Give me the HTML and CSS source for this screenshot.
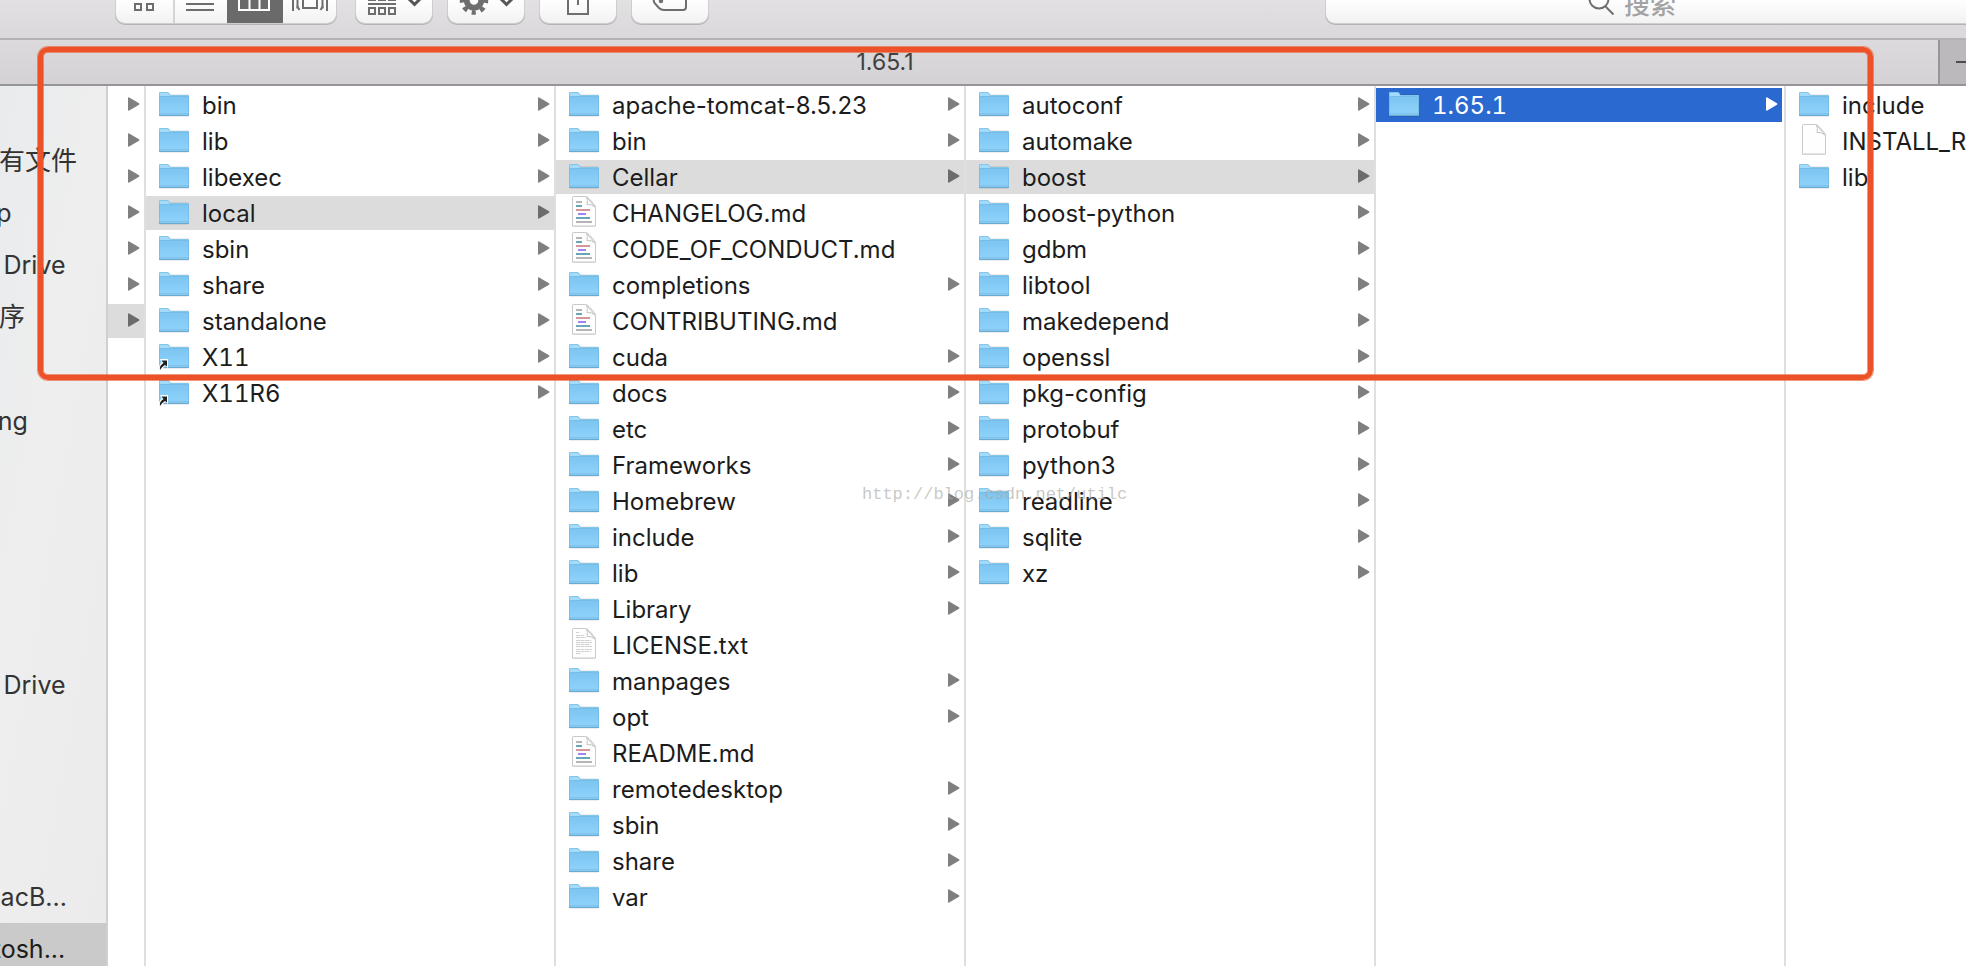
FILE: index.html
```html
<!DOCTYPE html>
<html lang="zh-CN">
<head>
<meta charset="utf-8">
<title>1.65.1</title>
<link rel="stylesheet" href="styles.css">
</head>
<body>
<svg class="defs" aria-hidden="true">
  <defs>
    <linearGradient id="fg" x1="0" y1="0" x2="0" y2="1"><stop offset="0" stop-color="#7cc6f2"/><stop offset="1" stop-color="#90d3fb"/></linearGradient>
    <symbol id="arrow" viewBox="0 0 12 14"><path d="M0 1.2Q0 0 1.2.5L11 6.2Q12 7 11 7.8L1.2 13.5Q0 14 0 12.8Z" fill="currentColor"/></symbol>
    <symbol id="folder" viewBox="0 0 30 32">
      <path d="M.5 6.5h29V28.500h-29z" fill="#000" opacity=".14"/>
      <path d="M0 5Q0 4 1 4H8.500Q9.500 4 10.200 5L11.500 7H29Q30 7 30 8V27Q30 28 29 28H1Q0 28 0 27Z" fill="#a3dbfb"/>
      <path d="M0 9H30V27Q30 28 29 28H1Q0 28 0 27Z" fill="url(#fg)"/>
      <path d="M.5 5Q.5 4.500 1 4.500H8.500Q9.300 4.500 9.800 5.300L11.200 7.500H29Q29.500 7.500 29.500 8V27H.5Z" fill="none" stroke="#6fb6df" stroke-opacity=".6"/>
      <path d="M0 8.500H30" stroke="#79bde6"/>
      <path d="M1 25.500H29" stroke="#7fc4ee"/>
      <path d="M0 27.500H30" stroke="#6ba9cd"/>
    </symbol>
    <symbol id="alias" viewBox="0 0 30 32">
      <use href="#folder" width="30" height="32"/>
      <path d="M0 31Q-1 25 3 22.500L1 19H9V28L6.500 26Q3 28 1.500 31Z" fill="#fff"/>
      <path d="M1 30Q0 25.500 4.500 23L2.500 20.500H8V26.500L6 25Q2.500 27 1 30Z" fill="#222"/>
    </symbol>
    <symbol id="page" viewBox="0 0 30 32">
      <path d="M4.500.8H17L26.300 10.500V30.500H3.500V1.800Q3.500.8 4.500.8Z" fill="#000" opacity=".12" stroke="#000" stroke-width="1"/>
      <path d="M4.500.5H16.500Q18.500.8 20 2.500L24.500 7.500Q26.500 9.500 26.500 12V29Q26.500 30 25.500 30H4.500Q3.500 30 3.500 29V1.500Q3.500.5 4.500.5Z" fill="#fefefe" stroke="#c9c9c9"/>
      <path d="M17.500 1Q19 4 18 8.500Q22.500 7.800 26 11Z" fill="#fff" stroke="#c4c4c4"/>
    </symbol>
    <symbol id="md" viewBox="0 0 30 32">
      <use href="#page" width="30" height="32"/>
      <g stroke-width="2"><path d="M7 6H13M7 26H23" stroke="#b5b5b5"/><path d="M7 10H13M7 22H21" stroke="#67a6b8"/><path d="M7 14H21" stroke="#d2969c"/><path d="M9 18H17" stroke="#a283f2"/></g>
    </symbol>
    <symbol id="txt" viewBox="0 0 30 32">
      <use href="#page" width="30" height="32"/>
      <path d="M7 4.500H10M7 7.500H15M7 9.500H17M7 12.500H22M7 14.500H23M7 16.500H21M7 18.500H23M7 21.500H23M7 23.500H22M7 25.500H12" stroke="#cfcfcf" stroke-dasharray="4 .6"/>
    </symbol>
  </defs>
</svg>

<div class="window">
  <header class="toolbar">
    <div class="segmented">
      <button class="seg grid" aria-label="图标"><svg viewBox="116 -22 57 46"><path d="M135 5h6v6h-6zM147 5h6v6h-6zM135-7h6v6h-6zM147-7h6v6h-6z"/></svg></button>
      <button class="seg list" aria-label="列表"><svg viewBox="175 -22 52 46"><path d="M186 11H214M186 5H214M186-1H214"/></svg></button>
      <button class="seg cols" aria-label="分栏" aria-pressed="true"><svg viewBox="227 -22 56 46"><path d="M239-10h30V11h-30zM249.500-10V11M259.500-10V11"/></svg></button>
      <button class="seg flow" aria-label="封面流"><svg viewBox="283 -22 53 46"><path d="M303-10h14V9h-14zM293-9V12M327-9V12M297.500-9V9.500M322.500-9V9.500"/><path d="M297 7l2.500 4M323 7l-2.500 4"/></svg></button>
    </div>
    <button class="tool" aria-label="排列"><svg viewBox="356 -22 76 46"><path d="M368 5H396M369 9h6v6h-6zM379 9h6v6h-6zM389 9h6v6h-6zM369-5h6v6h-6zM379-5h6v6h-6zM389-5h6v6h-6z"/><path class="chev" d="M408-1l6.500 6.500L421-1"/></svg></button>
    <button class="tool" aria-label="操作"><svg viewBox="448 -22 76 46"><circle cx="474" cy="1.500" r="7.300" stroke-width="6"/><circle cx="474" cy="1.500" r="12" stroke-width="4.500" stroke-dasharray="4.600 4.825" stroke-dashoffset="2.300" transform="rotate(90 474 1.500)"/><path class="chev" d="M500-1l6.500 6.500L513-1"/></svg></button>
    <button class="tool" aria-label="共享"><svg viewBox="540 -22 76 46"><path d="M574-6h-6V15h20V-6h-6M578-16V6"/></svg></button>
    <button class="tool" aria-label="标签"><svg viewBox="632 -22 76 46"><path d="M663-8H683Q686-8 686-5V8Q686 11 683 11H664Q661 11 659 9L654.500 4Q653 1.500 654.500-1L659-6Q661-8 663-8Z"/><circle cx="661" cy="2" r="1.200"/></svg></button>
    <label class="search">
      <svg viewBox="0 0 30 46"><circle cx="13" cy="22" r="9.500"/><path d="M19.500 29.500L27.500 37.500"/></svg>
      <input type="search" placeholder="搜索" aria-label="搜索">
    </label>
  </header>

  <div class="tabbar">
    <h1 class="tab">1.65.1</h1>
    <button class="newtab" aria-label="新标签页"><svg viewBox="0 0 30 44"><path d="M16 22H38M27 11V33"/></svg></button>
  </div>

  <main class="content">
    <nav class="sidebar">
      <ul>
        <li class="han">我的所有文件</li>
        <li>AirDrop</li>
        <li>iCloud Drive</li>
        <li class="han">应用程序</li>
        <li></li>
        <li>xiaoming</li>
      </ul>
      <ul>
        <li>iCloud Drive</li>
      </ul>
      <ul>
        <li>我的 MacB...</li>
        <li class="current">Macintosh...</li>
      </ul>
    </nav>
    <ul class="col narrow">
      <li><svg class="arrow"><use href="#arrow"/></svg></li>
      <li><svg class="arrow"><use href="#arrow"/></svg></li>
      <li><svg class="arrow"><use href="#arrow"/></svg></li>
      <li><svg class="arrow"><use href="#arrow"/></svg></li>
      <li><svg class="arrow"><use href="#arrow"/></svg></li>
      <li><svg class="arrow"><use href="#arrow"/></svg></li>
      <li class="open"><svg class="arrow"><use href="#arrow"/></svg></li>
    </ul>
    <ul class="col">
      <li><svg class="icon"><use href="#folder"/></svg><span>bin</span><svg class="arrow"><use href="#arrow"/></svg></li>
      <li><svg class="icon"><use href="#folder"/></svg><span>lib</span><svg class="arrow"><use href="#arrow"/></svg></li>
      <li><svg class="icon"><use href="#folder"/></svg><span>libexec</span><svg class="arrow"><use href="#arrow"/></svg></li>
      <li class="open"><svg class="icon"><use href="#folder"/></svg><span>local</span><svg class="arrow"><use href="#arrow"/></svg></li>
      <li><svg class="icon"><use href="#folder"/></svg><span>sbin</span><svg class="arrow"><use href="#arrow"/></svg></li>
      <li><svg class="icon"><use href="#folder"/></svg><span>share</span><svg class="arrow"><use href="#arrow"/></svg></li>
      <li><svg class="icon"><use href="#folder"/></svg><span>standalone</span><svg class="arrow"><use href="#arrow"/></svg></li>
      <li><svg class="icon"><use href="#alias"/></svg><span class="num">X11</span><svg class="arrow"><use href="#arrow"/></svg></li>
      <li><svg class="icon"><use href="#alias"/></svg><span class="num">X11R6</span><svg class="arrow"><use href="#arrow"/></svg></li>
    </ul>
    <ul class="col">
      <li><svg class="icon"><use href="#folder"/></svg><span>apache-tomcat-8.5.23</span><svg class="arrow"><use href="#arrow"/></svg></li>
      <li><svg class="icon"><use href="#folder"/></svg><span>bin</span><svg class="arrow"><use href="#arrow"/></svg></li>
      <li class="open"><svg class="icon"><use href="#folder"/></svg><span>Cellar</span><svg class="arrow"><use href="#arrow"/></svg></li>
      <li><svg class="icon"><use href="#md"/></svg><span>CHANGELOG.md</span></li>
      <li><svg class="icon"><use href="#md"/></svg><span>CODE_OF_CONDUCT.md</span></li>
      <li><svg class="icon"><use href="#folder"/></svg><span>completions</span><svg class="arrow"><use href="#arrow"/></svg></li>
      <li><svg class="icon"><use href="#md"/></svg><span>CONTRIBUTING.md</span></li>
      <li><svg class="icon"><use href="#folder"/></svg><span>cuda</span><svg class="arrow"><use href="#arrow"/></svg></li>
      <li><svg class="icon"><use href="#folder"/></svg><span>docs</span><svg class="arrow"><use href="#arrow"/></svg></li>
      <li><svg class="icon"><use href="#folder"/></svg><span>etc</span><svg class="arrow"><use href="#arrow"/></svg></li>
      <li><svg class="icon"><use href="#folder"/></svg><span>Frameworks</span><svg class="arrow"><use href="#arrow"/></svg></li>
      <li><svg class="icon"><use href="#folder"/></svg><span>Homebrew</span><svg class="arrow"><use href="#arrow"/></svg></li>
      <li><svg class="icon"><use href="#folder"/></svg><span>include</span><svg class="arrow"><use href="#arrow"/></svg></li>
      <li><svg class="icon"><use href="#folder"/></svg><span>lib</span><svg class="arrow"><use href="#arrow"/></svg></li>
      <li><svg class="icon"><use href="#folder"/></svg><span>Library</span><svg class="arrow"><use href="#arrow"/></svg></li>
      <li><svg class="icon"><use href="#txt"/></svg><span>LICENSE.txt</span></li>
      <li><svg class="icon"><use href="#folder"/></svg><span>manpages</span><svg class="arrow"><use href="#arrow"/></svg></li>
      <li><svg class="icon"><use href="#folder"/></svg><span>opt</span><svg class="arrow"><use href="#arrow"/></svg></li>
      <li><svg class="icon"><use href="#md"/></svg><span>README.md</span></li>
      <li><svg class="icon"><use href="#folder"/></svg><span>remotedesktop</span><svg class="arrow"><use href="#arrow"/></svg></li>
      <li><svg class="icon"><use href="#folder"/></svg><span>sbin</span><svg class="arrow"><use href="#arrow"/></svg></li>
      <li><svg class="icon"><use href="#folder"/></svg><span>share</span><svg class="arrow"><use href="#arrow"/></svg></li>
      <li><svg class="icon"><use href="#folder"/></svg><span>var</span><svg class="arrow"><use href="#arrow"/></svg></li>
    </ul>
    <ul class="col">
      <li><svg class="icon"><use href="#folder"/></svg><span>autoconf</span><svg class="arrow"><use href="#arrow"/></svg></li>
      <li><svg class="icon"><use href="#folder"/></svg><span>automake</span><svg class="arrow"><use href="#arrow"/></svg></li>
      <li class="open"><svg class="icon"><use href="#folder"/></svg><span>boost</span><svg class="arrow"><use href="#arrow"/></svg></li>
      <li><svg class="icon"><use href="#folder"/></svg><span>boost-python</span><svg class="arrow"><use href="#arrow"/></svg></li>
      <li><svg class="icon"><use href="#folder"/></svg><span>gdbm</span><svg class="arrow"><use href="#arrow"/></svg></li>
      <li><svg class="icon"><use href="#folder"/></svg><span>libtool</span><svg class="arrow"><use href="#arrow"/></svg></li>
      <li><svg class="icon"><use href="#folder"/></svg><span>makedepend</span><svg class="arrow"><use href="#arrow"/></svg></li>
      <li><svg class="icon"><use href="#folder"/></svg><span>openssl</span><svg class="arrow"><use href="#arrow"/></svg></li>
      <li><svg class="icon"><use href="#folder"/></svg><span>pkg-config</span><svg class="arrow"><use href="#arrow"/></svg></li>
      <li><svg class="icon"><use href="#folder"/></svg><span>protobuf</span><svg class="arrow"><use href="#arrow"/></svg></li>
      <li><svg class="icon"><use href="#folder"/></svg><span>python3</span><svg class="arrow"><use href="#arrow"/></svg></li>
      <li><svg class="icon"><use href="#folder"/></svg><span>readline</span><svg class="arrow"><use href="#arrow"/></svg></li>
      <li><svg class="icon"><use href="#folder"/></svg><span>sqlite</span><svg class="arrow"><use href="#arrow"/></svg></li>
      <li><svg class="icon"><use href="#folder"/></svg><span>xz</span><svg class="arrow"><use href="#arrow"/></svg></li>
    </ul>
    <ul class="col">
      <li class="selected"><svg class="icon"><use href="#folder"/></svg><span class="num">1.65.1</span><svg class="arrow"><use href="#arrow"/></svg></li>
    </ul>
    <ul class="col">
      <li><svg class="icon"><use href="#folder"/></svg><span>include</span></li>
      <li><svg class="icon"><use href="#page"/></svg><span>INSTALL_RECEIPT.json</span></li>
      <li><svg class="icon"><use href="#folder"/></svg><span>lib</span></li>
    </ul>
  </main>

  <div class="marker"></div>
  <p class="watermark">http://blog.csdn.net/utilc</p>
</div>
</body>
</html>
```

FILE: styles.css
```css
* { box-sizing: border-box; }

body {
  margin: 0;
  background: #fff;
  color: #1c1c1c;
  font: 24px/34px Inter, "Noto Sans CJK SC", sans-serif;
}

ul, h1, p { margin: 0; padding: 0; list-style: none; }
button { padding: 0; border: 0; background: none; }
svg { display: block; flex: none; }
.defs { position: absolute; width: 0; height: 0; }
.num { font-variant-numeric: tabular-nums; }

.window {
  position: relative;
  display: flex;
  flex-direction: column;
  height: 100vh;
  overflow: hidden;
}

/* toolbar */
.toolbar {
  display: flex;
  flex: none;
  align-items: flex-end;
  gap: 16px;
  height: 40px;
  padding: 0 0 15px 116px;
  overflow: hidden;
  background: linear-gradient(#e3e0e3, #dad8da);
  border-bottom: 2px solid #b3b1b3;
}
.toolbar svg {
  height: 46px;
  fill: none;
  stroke: #6e6e6e;
  stroke-width: 2;
}
.segmented, .tool, .search {
  flex: none;
  height: 46px;
  border-radius: 9px;
  background: linear-gradient(#fefefe 50%, #f2f2f2);
  box-shadow: 0 0 0 1px #cfcdcf, 0 1px 0 1px #b5b3b5;
}
.segmented { display: flex; margin-right: 4px; overflow: hidden; }
.grid { width: 59px; border-right: 2px solid #d5d5d5; }
.list { width: 52px; }
.cols { width: 56px; background: #6a6a6a; }
.flow { width: 53px; }
.toolbar .cols svg { stroke: #fff; }
.tool { width: 76px; }
.toolbar .chev { stroke: #555; stroke-width: 3; }
.search {
  display: flex;
  flex: 1;
  margin-left: 602px;
  padding-left: 260px;
  border-radius: 9px 0 0 9px;
}
.search svg { width: 30px; }
.search input {
  flex: 1;
  min-width: 0;
  height: 50px;
  padding: 4px 8px 0;
  border: 0;
  background: none;
  outline: 0;
  font: 500 26px/46px Inter, "Noto Sans CJK SC", sans-serif;
}
.search input::placeholder { color: #a3a3a3; opacity: 1; }

/* tab bar */
.tabbar {
  display: flex;
  flex: none;
  height: 46px;
  background: linear-gradient(#dcdadc, #d4d2d4);
  border-bottom: 2px solid #979597;
}
.tab {
  flex: 1;
  padding-right: 168px;
  color: #404040;
  font-size: 23px;
  font-weight: 400;
  line-height: 44px;
  text-align: center;
}
.newtab {
  width: 28px;
  overflow: hidden;
  background: #bbb9bb;
  border-left: 2px solid #979597;
}
.newtab svg { width: 30px; fill: none; stroke: #4c4c4c; stroke-width: 2; }

/* browser */
.content { display: flex; flex: 1; min-height: 0; overflow: hidden; }
.sidebar {
  display: flex;
  flex: 0 0 108px;
  flex-direction: column;
  padding-top: 49px;
  overflow: hidden;
  background: linear-gradient(100deg, #e9ebed, #eeeeee 40%, #ebebeb);
  border-right: 2px solid #d0d0d0;
  color: #333;
  font-size: 25px;
  line-height: 52px;
  white-space: nowrap;
}
.sidebar ul { margin-bottom: 212px; }
.sidebar ul + ul { margin-bottom: 160px; }
.sidebar li { height: 52px; text-indent: -79px; }
.sidebar .han { font-size: 26px; }
.sidebar .current { background: #cacaca; color: #1c1c1c; }

.col {
  flex: 0 0 410px;
  padding-top: 2px;
  border-right: 2px solid #dfdfdf;
}
.narrow { flex-basis: 38px; }
.col:last-child { flex: 1 0 0; min-width: 0; border: 0; overflow: hidden; }
.col li {
  display: flex;
  align-items: center;
  height: 34px;
  margin-bottom: 2px;
  padding: 0 4px 0 13px;
  white-space: nowrap;
}
.col span { padding-top: 2px; }
.icon { width: 30px; height: 32px; margin: 0 13px 2px 0; }
.arrow { width: 12px; height: 14px; margin: 0 0 2px auto; color: #7f7f7f; }
.open { background: #dcdcdc; }
.open .arrow { color: #6c6c6c; }
.col .selected { margin-right: 2px; background: #2a6ad0; color: #fff; }
.selected .arrow { color: #fff; }

/* overlays */
.marker {
  position: absolute;
  top: 47px;
  right: 93px;
  left: 38px;
  height: 333px;
  border: 5px solid #ec5128;
  border-radius: 10px;
  box-shadow: 0 0 0 1px rgba(236, 81, 40, .6), inset 0 0 0 1px rgba(236, 81, 40, .6);
}
.watermark {
  position: absolute;
  top: 478px;
  left: 862px;
  color: rgba(170, 170, 165, .65);
  font: 17px/34px "Liberation Mono", monospace;
}
```
